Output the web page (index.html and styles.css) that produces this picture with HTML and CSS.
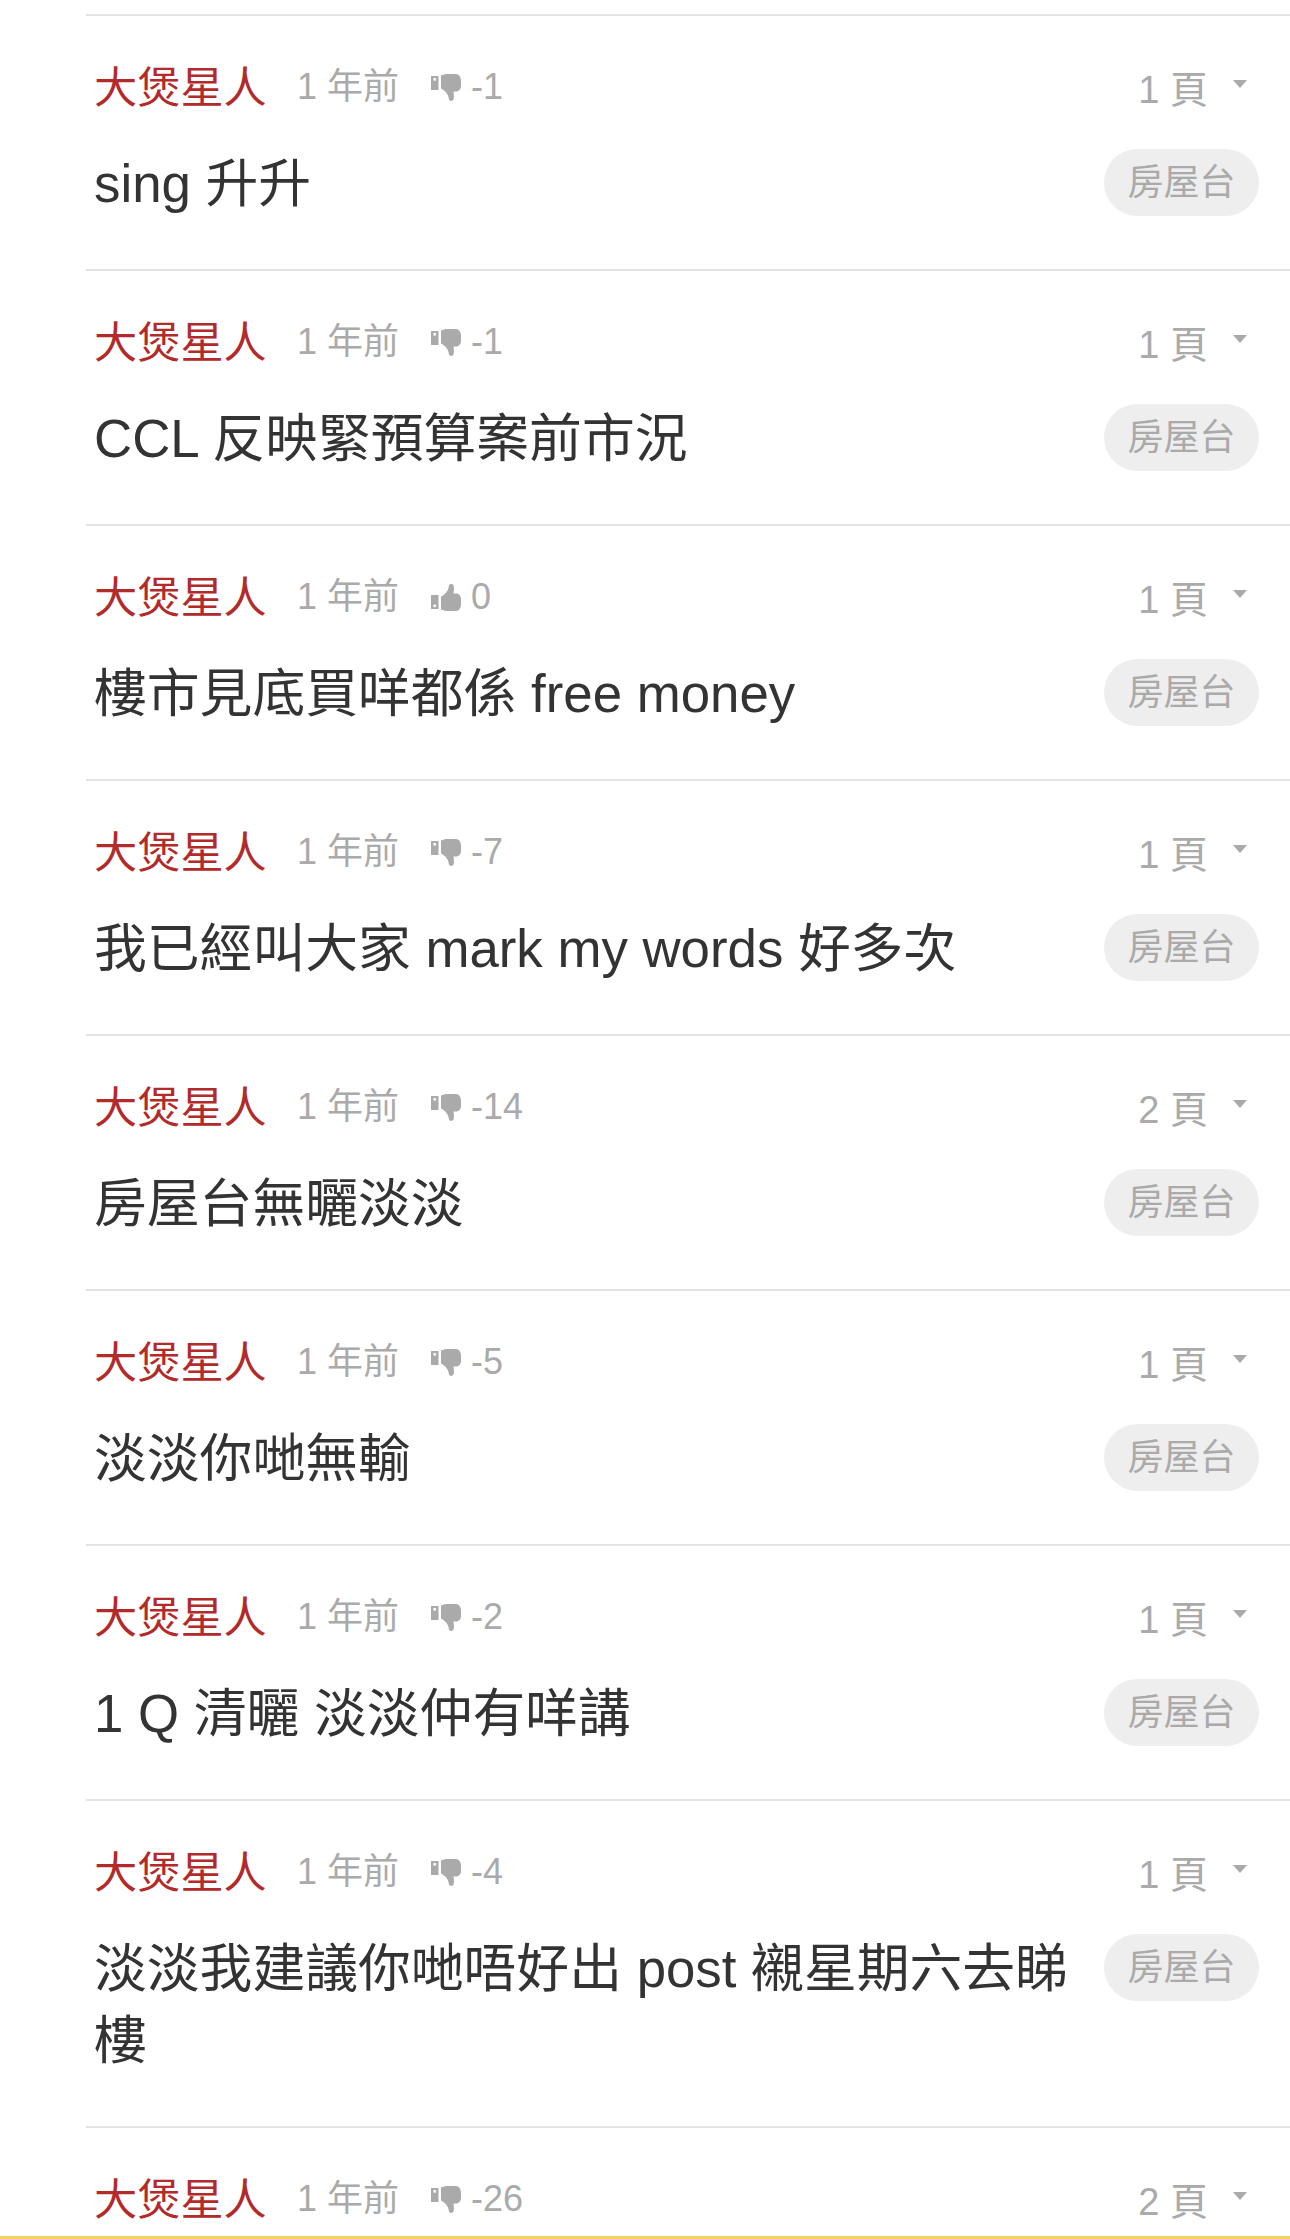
FILE: index.html
```html
<!DOCTYPE html>
<html lang="zh-Hant">
<head>
    <meta charset="UTF-8" />
    <title>大煲星人</title>
    <link rel="stylesheet" href="styles.css">
</head>
<body>
    <svg class="defs" width="0" height="0">
        <symbol id="thumb-down" viewBox="0 0 30 27">
            <path d="M0 2h7.500v14H0z M3.700 3.800a1.500 1.500 0 1 0 0 3a1.500 1.500 0 0 0 0-3z" fill-rule="evenodd"/>
            <path d="M10 1.500c2-.8 4-1.500 7-1.500h8c3 0 5 3 5 7v5c0 3-2 5.500-5 5.500h-2.500c.3 3 .8 5.500 0 8c-.8 1.800-3.500 2-4.500 0c-.5-3-1-4.500-2.500-6.500c-1.500-2-3.500-3.500-5.500-4.500z"/>
        </symbol>
        <symbol id="thumb-up" viewBox="0 0 30 27">
            <g transform="translate(0 27) scale(1 -1)">
                <path d="M0 2h7.500v14H0z M3.700 3.800a1.500 1.500 0 1 0 0 3a1.500 1.500 0 0 0 0-3z" fill-rule="evenodd"/>
                <path d="M10 1.500c2-.8 4-1.500 7-1.500h8c3 0 5 3 5 7v5c0 3-2 5.500-5 5.500h-2.500c.3 3 .8 5.500 0 8c-.8 1.800-3.500 2-4.500 0c-.5-3-1-4.500-2.500-6.500c-1.500-2-3.500-3.500-5.500-4.500z"/>
            </g>
        </symbol>
    </svg>

    <div class="list">
        <div class="item">
            <div class="meta">
                <span class="name">大煲星人</span><span class="time">1 年前</span>
                <span class="score"><svg class="thumb"><use href="#thumb-down"/></svg>-1</span>
                <span class="pages">1 頁<i class="caret"></i></span>
            </div>
            <div class="body">
                <div class="title">sing 升升</div>
                <span class="tag">房屋台</span>
            </div>
        </div>
        <div class="item">
            <div class="meta">
                <span class="name">大煲星人</span><span class="time">1 年前</span>
                <span class="score"><svg class="thumb"><use href="#thumb-down"/></svg>-1</span>
                <span class="pages">1 頁<i class="caret"></i></span>
            </div>
            <div class="body">
                <div class="title">CCL 反映緊預算案前市況</div>
                <span class="tag">房屋台</span>
            </div>
        </div>
        <div class="item">
            <div class="meta">
                <span class="name">大煲星人</span><span class="time">1 年前</span>
                <span class="score"><svg class="thumb"><use href="#thumb-up"/></svg>0</span>
                <span class="pages">1 頁<i class="caret"></i></span>
            </div>
            <div class="body">
                <div class="title">樓市見底買咩都係 free money</div>
                <span class="tag">房屋台</span>
            </div>
        </div>
        <div class="item">
            <div class="meta">
                <span class="name">大煲星人</span><span class="time">1 年前</span>
                <span class="score"><svg class="thumb"><use href="#thumb-down"/></svg>-7</span>
                <span class="pages">1 頁<i class="caret"></i></span>
            </div>
            <div class="body">
                <div class="title">我已經叫大家 mark my words 好多次</div>
                <span class="tag">房屋台</span>
            </div>
        </div>
        <div class="item">
            <div class="meta">
                <span class="name">大煲星人</span><span class="time">1 年前</span>
                <span class="score"><svg class="thumb"><use href="#thumb-down"/></svg>-14</span>
                <span class="pages">2 頁<i class="caret"></i></span>
            </div>
            <div class="body">
                <div class="title">房屋台無曬淡淡</div>
                <span class="tag">房屋台</span>
            </div>
        </div>
        <div class="item">
            <div class="meta">
                <span class="name">大煲星人</span><span class="time">1 年前</span>
                <span class="score"><svg class="thumb"><use href="#thumb-down"/></svg>-5</span>
                <span class="pages">1 頁<i class="caret"></i></span>
            </div>
            <div class="body">
                <div class="title">淡淡你哋無輸</div>
                <span class="tag">房屋台</span>
            </div>
        </div>
        <div class="item">
            <div class="meta">
                <span class="name">大煲星人</span><span class="time">1 年前</span>
                <span class="score"><svg class="thumb"><use href="#thumb-down"/></svg>-2</span>
                <span class="pages">1 頁<i class="caret"></i></span>
            </div>
            <div class="body">
                <div class="title">1 Q 清曬 淡淡仲有咩講</div>
                <span class="tag">房屋台</span>
            </div>
        </div>
        <div class="item">
            <div class="meta">
                <span class="name">大煲星人</span><span class="time">1 年前</span>
                <span class="score"><svg class="thumb"><use href="#thumb-down"/></svg>-4</span>
                <span class="pages">1 頁<i class="caret"></i></span>
            </div>
            <div class="body">
                <div class="title">淡淡我建議你哋唔好出 post 襯星期六去睇樓</div>
                <span class="tag">房屋台</span>
            </div>
        </div>
        <div class="item">
            <div class="meta">
                <span class="name">大煲星人</span><span class="time">1 年前</span>
                <span class="score"><svg class="thumb"><use href="#thumb-down"/></svg>-26</span>
                <span class="pages">2 頁<i class="caret"></i></span>
            </div>
        </div>
    </div>

    <div class="bottom-bar"></div>
</body>
</html>
```

FILE: styles.css
```css
html, body {
    height: 2239px;
    overflow: hidden;
}
body {
    font-family: "Liberation Sans", "Noto Sans CJK TC", sans-serif;
    background-color: #ffffff;
    margin: 0;
    padding: 14px 0 0 86px;
    box-sizing: border-box;
}
.defs {
    display: block;
    height: 0;
}
.item {
    border-top: 2px solid #e3e3e3;
    padding: 34px 31px 49px 8px;
}
.meta {
    display: flex;
    align-items: flex-start;
    height: 68px;
    margin-bottom: 31px;
    color: #aaaaaa;
    font-size: 36px;
}
.name {
    width: 203px;
    margin-top: 3px;
    color: #b22a2a;
    font-size: 43.2px;
}
.time {
    width: 134px;
    margin-top: 7px;
}
.score {
    margin-top: 16px;
}
.thumb {
    width: 30px;
    height: 27px;
    margin-right: 10px;
    fill: #aaaaaa;
    vertical-align: -2px;
}
.pages {
    display: flex;
    align-items: center;
    align-self: flex-end;
    margin: 0 0 4px auto;
    padding-right: 12px;
    font-size: 38px;
}
.caret {
    width: 0;
    height: 0;
    margin: -6px 0 0 25px;
    border-top: 8px solid #aaaaaa;
    border-left: 7px solid transparent;
    border-right: 7px solid transparent;
}
.body {
    display: flex;
    align-items: flex-start;
    justify-content: space-between;
}
.title {
    flex: 1;
    margin: -1px 30px 0 0;
    color: #333333;
    font-size: 52.8px;
    line-height: 72px;
}
.tag {
    flex: none;
    width: 155px;
    height: 67px;
    border-radius: 34px;
    background-color: #eeeeee;
    color: #aaaaaa;
    font-size: 36px;
    line-height: 67px;
    text-align: center;
}
.bottom-bar {
    position: fixed;
    left: 0;
    right: 0;
    bottom: 0;
    height: 3px;
    background-color: #f6cf62;
}
```
